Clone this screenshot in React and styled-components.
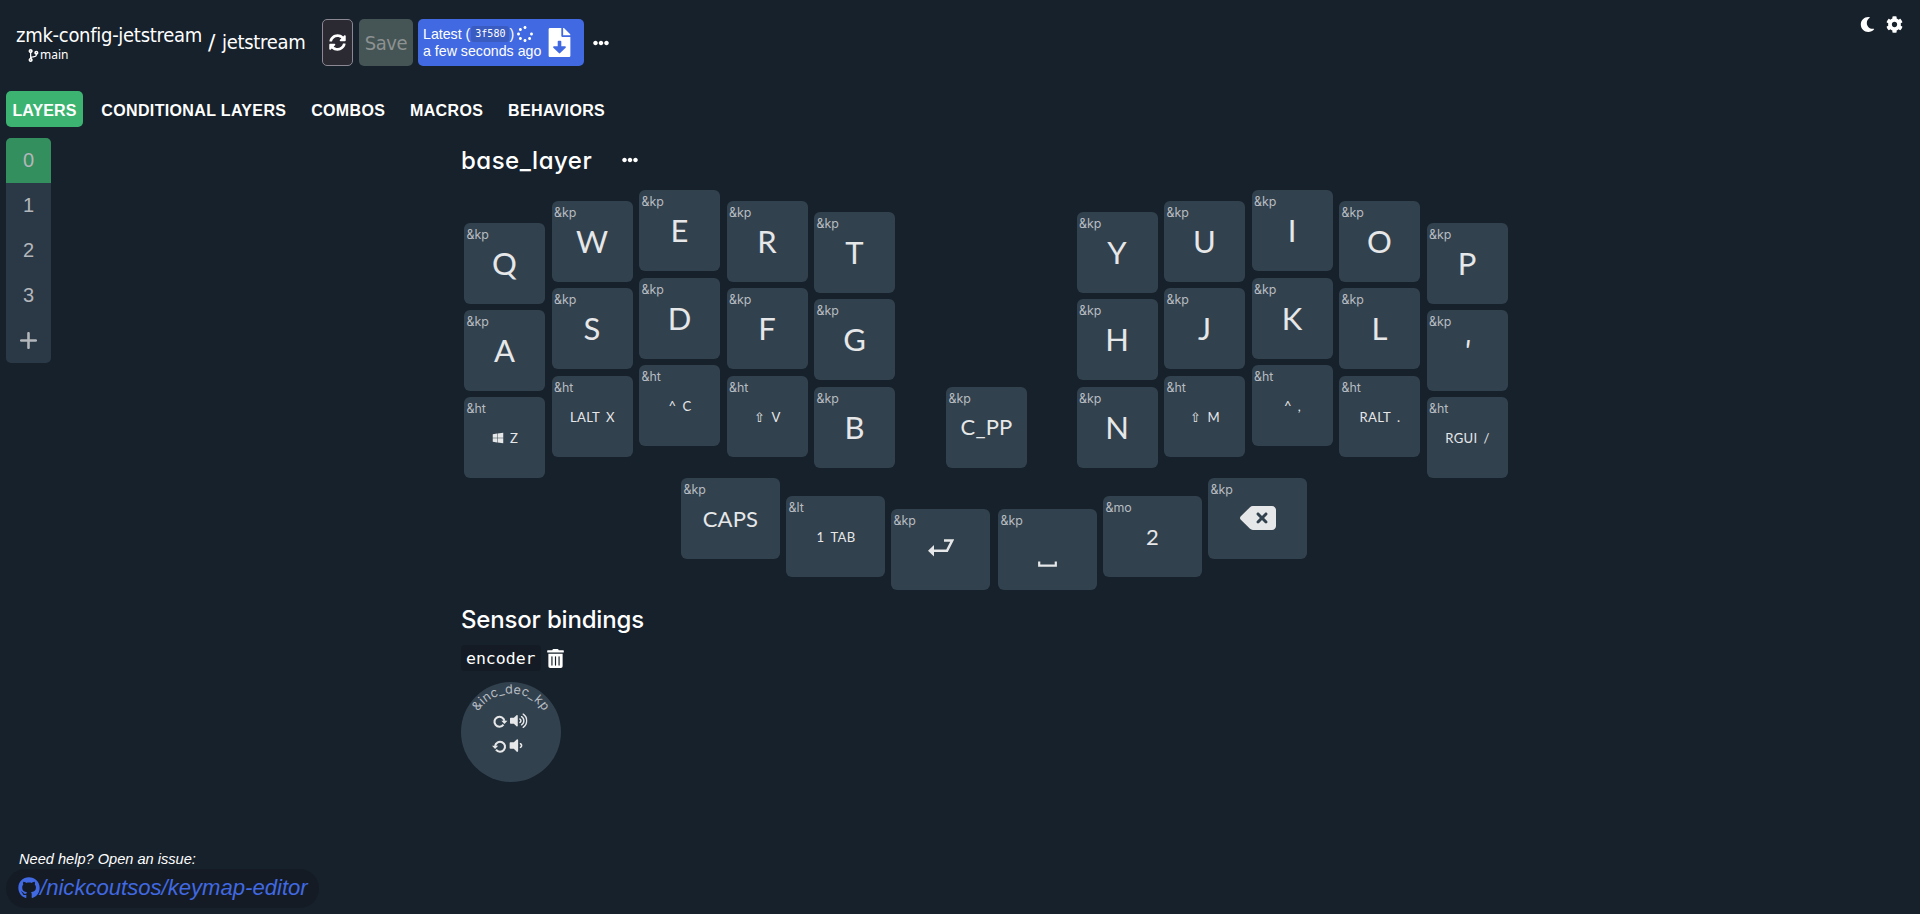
import React from 'react';
import styled, { createGlobalStyle, css } from 'styled-components';
import { FaSyncAlt, FaCodeBranch, FaMoon, FaCog, FaEllipsisH, FaSpinner, FaFileDownload, FaTrashAlt, FaGithub, FaWindows, FaVolumeUp, FaVolumeDown } from 'react-icons/fa';
import { FaDeleteLeft } from 'react-icons/fa6';

const GlobalStyle = createGlobalStyle`
  *, *::before, *::after { box-sizing: border-box; }
  html, body { margin: 0; padding: 0; background: #17212b; }
  body { overflow: hidden; font-family: "Liberation Sans", Arial, sans-serif; color: #fff; }
  button { font: inherit; color: inherit; border: 0; background: none; padding: 0; margin: 0; }
`;

const rounded = css`
  font-family: Inter, Lato, sans-serif;
  font-feature-settings: "cv11" 1;
`;

const Page = styled.div`
  display: flex;
  flex-direction: column;
  width: 100%;
  height: 914px;
  overflow: hidden;
  background: #17212b;
`;

const TopBar = styled.header`
  display: flex;
  align-items: center;
  height: 47px;
  margin-top: 19px;
  padding-left: 16px;
`;

const Crumb = styled.div`
  display: flex;
  flex-direction: column;
  height: 47px;
  padding-top: 4px;
`;

const RepoName = styled.span`
  font-family: "DejaVu Sans", sans-serif;
  font-stretch: condensed;
  font-size: 20px;
  line-height: 25px;
  letter-spacing: -0.28px;
  white-space: nowrap;
`;

const Branch = styled.span`
  display: flex;
  align-items: center;
  margin-left: 11px;
  font-family: "Noto Sans", sans-serif;
  font-size: 12px;
  line-height: 14px;
  svg { width: 13px; height: 13px; }
`;

const Slash = styled.span`
  margin: 0 6.5px 0 6px;
  font-family: "DejaVu Sans", sans-serif;
  font-size: 22px;
`;

const TitleGroup = styled.div`
  display: flex;
  align-items: center;
  width: 306px;
`;

const RefreshButton = styled.button`
  display: grid;
  place-items: center;
  width: 31px;
  height: 47px;
  margin-right: 6px;
  border: 1px solid #8b8793;
  border-radius: 5px;
  background: #2b2932;
  svg { width: 17px; height: 17px; }
`;

const SaveButton = styled.button`
  width: 54px;
  height: 47px;
  margin-right: 5px;
  border-radius: 5px;
  background: #455454;
  color: #8c9192;
  font-family: "DejaVu Sans", sans-serif;
  font-size: 20px;
  font-stretch: condensed;
  letter-spacing: -0.4px;
`;

const BuildButton = styled.button`
  display: flex;
  align-items: center;
  width: 166px;
  height: 47px;
  padding-left: 5px;
  border-radius: 5px;
  background: #4169e1;
  font-size: 14.2px;
  text-align: left;
`;

const BuildText = styled.div`
  width: 122px;
  line-height: 17px;
  white-space: nowrap;
`;

const BuildLine = styled.div`
  display: flex;
  align-items: center;
  height: 17px;
  svg { width: 16px; height: 16px; margin-left: 3px; }
`;

const Hash = styled.code`
  margin-left: 1px;
  padding: 0 4px;
  border-radius: 3px;
  background: #3a5bbf;
  font-family: "DejaVu Sans Mono", monospace;
  font-size: 10px;
  line-height: 16px;
`;

const MoreDots = styled.span`
  display: flex;
  margin-left: ${(p) => p.$gap}px;
  svg { width: 16px; height: 16px; }
`;

const PageActions = styled.div`
  display: flex;
  align-items: center;
  gap: 11px;
  align-self: flex-start;
  margin: -3px 17px 0 auto;
`;

const Tabs = styled.nav`
  display: flex;
  gap: 12px;
  margin: 25px 0 11px 6px;
`;

const Tab = styled.button`
  height: 36px;
  padding: 3px 6.3px 0 6.5px;
  border-radius: 5px;
  background: ${(p) => (p.$active ? '#3cb371' : 'transparent')};
  font-weight: bold;
  font-size: 16px;
  letter-spacing: ${(p) => (p.$active ? 0.1 : 0.35)}px;
  white-space: nowrap;
`;

const Body = styled.main`
  display: flex;
  flex: 1;
`;

const LayerList = styled.div`
  width: 45px;
  height: 225px;
  margin-left: 6px;
  border-radius: 5px;
  overflow: hidden;
  background: #2b3947;
`;

const LayerItem = styled.button`
  display: grid;
  place-items: center;
  width: 45px;
  height: 45px;
  background: ${(p) => (p.$active ? '#338f5e' : 'transparent')};
  color: #b3b6ba;
  font-size: 20px;
`;

const Editor = styled.section`
  display: flex;
  flex-direction: column;
  width: 1060px;
  margin-left: 410px;
`;

const LayerTitle = styled.div`
  display: flex;
  align-items: center;
  height: 44px;
  h2 {
    ${rounded}
    width: 132px;
    margin: 0;
    font-size: 24px;
    font-weight: 500;
    letter-spacing: 0.5px;
    white-space: nowrap;
  }
`;

const Keyboard = styled.div`
  height: 400px;
  padding: 8px 0 0 3px;
`;

const KeyRow = styled.div`
  display: flex;
  height: 288px;
`;

const Half = styled.div`
  display: flex;
  gap: 6.5px;
`;

const Column = styled.div`
  display: flex;
  flex-direction: column;
  gap: 6.5px;
  margin-top: ${(p) => p.$offset}px;
`;

const CenterKey = styled.div`
  width: 181.5px;
  margin-top: 196.9px;
  padding-left: 51px;
`;

const Thumbs = styled.div`
  display: flex;
  gap: 6px;
  padding-left: 217px;
`;

const ThumbSlot = styled.div`
  margin-top: ${(p) => p.$offset}px;
  margin-left: ${(p) => p.$shift || 0}px;
`;

const KeyBox = styled.div`
  display: flex;
  flex-direction: column;
  width: ${(p) => (p.$wide ? 99 : 81)}px;
  height: 81px;
  border-radius: 6px;
  background: #32414e;
`;

const Behavior = styled.span`
  ${rounded}
  height: 20px;
  padding: 4px 0 0 2.5px;
  color: #b7bcc1;
  font-size: 12.4px;
  line-height: 16px;
`;

const Legend = styled.span`
  display: flex;
  justify-content: center;
  align-items: center;
  gap: ${(p) => (p.$kind === 'small' ? 6 : 0)}px;
  height: ${(p) => (p.$kind === 'small' ? 42 : 40)}px;
  padding-left: ${(p) => (p.$kind === 'small' ? 1 : 0)}px;
  color: #e6e7e8;
  font-family: Lato, sans-serif;
  font-size: ${(p) => ({ big: 31, mid: 22, small: 13.1 })[p.$kind]}px;
  font-style: ${(p) => (p.$slanted ? 'italic' : 'normal')};
  letter-spacing: ${(p) => ({ big: 0, mid: 0.2, small: 0.3 })[p.$kind]}px;
  svg { display: block; }
`;

const SensorTitle = styled.h2`
  ${rounded}
  margin: 20px 0 0;
  font-size: 24px;
  font-weight: 500;
  line-height: 36px;
  letter-spacing: -0.18px;
`;

const SensorName = styled.div`
  display: flex;
  align-items: center;
  height: 26px;
  margin-top: 7px;
  svg { width: 17px; height: 19px; margin-left: 5.5px; }
  code {
    width: 80px;
    height: 26px;
    padding: 1px 0 0 5px;
    border-radius: 4px;
    background: #141b24;
    font-family: "DejaVu Sans Mono", monospace;
    font-size: 16.5px;
    line-height: 26px;
  }
`;

const Encoder = styled.svg`
  display: block;
  margin-top: 11px;
  width: 100px;
  height: 100px;
  overflow: visible;
  text {
    ${rounded}
    font-size: 12.6px;
    letter-spacing: 0.3px;
    fill: #b7bcc1;
  }
`;

const Help = styled.footer`
  display: flex;
  flex-direction: column;
  height: 63px;
  margin-bottom: 6px;
  padding-left: 6px;
  font-style: italic;
`;

const HelpText = styled.span`
  height: 24px;
  padding: 5px 0 0 13px;
  font-size: 14.6px;
  line-height: 18px;
`;

const RepoLink = styled.a`
  display: flex;
  align-items: center;
  width: 313px;
  height: 39px;
  padding: 0 0 2px 12px;
  border-radius: 20px;
  background: #141b24;
  color: #4169e1;
  font-size: 22.1px;
  white-space: nowrap;
  svg { width: 22px; height: 22px; }
`;

const PlusIcon = () => (
  <svg width="17" height="17" viewBox="0 0 17 17" stroke="currentColor" strokeWidth="2.6" strokeLinecap="round">
    <path d="M8.5 1.2V15.8M1.2 8.5H15.8" />
  </svg>
);

const ReturnIcon = () => (
  <svg width="26" height="20" viewBox="0 0 26 20" fill="none">
    <path d="M16 1.5H24.2L19 11.7H5" stroke="#e6e7e8" strokeWidth="2.5" />
    <path d="M0 11.7L6 6V17.5Z" fill="#e6e7e8" />
  </svg>
);

const SpaceIcon = () => (
  <svg width="19" height="36" viewBox="0 0 19 36" fill="none">
    <path d="M1.2 30.5V34.7H17.8V30.5" stroke="#e6e7e8" strokeWidth="2.2" />
  </svg>
);

const Turn = ({ x, y, flip }) => (
  <g transform={`translate(${x} ${y}) scale(${flip ? -1 : 1} 1)`}>
    <path d="M4 3.2A5 5 0 1 1 4.9 -0.6" fill="none" stroke="currentColor" strokeWidth="2.1" />
    <path d="M1.8 -0.8H8L4.9 2.6Z" fill="currentColor" />
  </g>
);

function Key({ bind = '&kp', kind = 'big', wide, children }) {
  return (
    <KeyBox $wide={wide}>
      <Behavior>{bind}</Behavior>
      <Legend $kind={kind} $slanted={children === "'"}>{children}</Legend>
    </KeyBox>
  );
}

const hold = (...parts) => ({ bind: '&ht', kind: 'small', parts });

const leftColumns = [
  [32.8, ['Q', 'A', hold(<FaWindows size={12} />, 'Z')]],
  [10.9, ['W', 'S', hold('LALT', 'X')]],
  [0, ['E', 'D', hold('^', 'C')]],
  [10.9, ['R', 'F', hold('⇧', 'V')]],
  [21.9, ['T', 'G', 'B']],
];

const rightColumns = [
  [21.9, ['Y', 'H', 'N']],
  [10.9, ['U', 'J', hold('⇧', 'M')]],
  [0, ['I', 'K', hold('^', ',')]],
  [10.9, ['O', 'L', hold('RALT', '.')]],
  [32.8, ['P', "'", hold('RGUI', '/')]],
];

function KeyColumns({ columns }) {
  return (
    <Half>
      {columns.map(([offset, keys], i) => (
        <Column key={i} $offset={offset}>
          {keys.map((k, j) =>
            typeof k === 'string' ? (
              <Key key={j}>{k}</Key>
            ) : (
              <Key key={j} bind={k.bind} kind={k.kind}>
                {k.parts.map((part, n) => <span key={n}>{part}</span>)}
              </Key>
            )
          )}
        </Column>
      ))}
    </Half>
  );
}

export default function App() {
  return (
    <Page>
      <GlobalStyle />
      <TopBar>
        <TitleGroup>
          <Crumb>
            <RepoName>zmk-config-jetstream</RepoName>
            <Branch><FaCodeBranch />main</Branch>
          </Crumb>
          <Slash>/</Slash>
          <RepoName>jetstream</RepoName>
        </TitleGroup>
        <RefreshButton><FaSyncAlt /></RefreshButton>
        <SaveButton>Save</SaveButton>
        <BuildButton>
          <BuildText>
            <BuildLine>Latest (<Hash>3f580</Hash>)<FaSpinner /></BuildLine>
            <BuildLine>a few seconds ago</BuildLine>
          </BuildText>
          <FaFileDownload size={29} />
        </BuildButton>
        <MoreDots $gap={9}><FaEllipsisH /></MoreDots>
        <PageActions><FaMoon size={15} /><FaCog size={17} /></PageActions>
      </TopBar>
      <Tabs>
        <Tab $active>LAYERS</Tab>
        <Tab>CONDITIONAL LAYERS</Tab>
        <Tab>COMBOS</Tab>
        <Tab>MACROS</Tab>
        <Tab>BEHAVIORS</Tab>
      </Tabs>
      <Body>
        <LayerList>
          <LayerItem $active>0</LayerItem>
          <LayerItem>1</LayerItem>
          <LayerItem>2</LayerItem>
          <LayerItem>3</LayerItem>
          <LayerItem><PlusIcon /></LayerItem>
        </LayerList>
        <Editor>
          <LayerTitle>
            <h2>base_layer</h2>
            <MoreDots $gap={29}><FaEllipsisH /></MoreDots>
          </LayerTitle>
          <Keyboard>
            <KeyRow>
              <KeyColumns columns={leftColumns} />
              <CenterKey><Key kind="mid">C_PP</Key></CenterKey>
              <KeyColumns columns={rightColumns} />
            </KeyRow>
            <Thumbs>
              <ThumbSlot $offset={0}><Key wide kind="mid">CAPS</Key></ThumbSlot>
              <ThumbSlot $offset={18}><Key wide bind="&lt" kind="small"><span>1</span><span>TAB</span></Key></ThumbSlot>
              <ThumbSlot $offset={31}><Key wide><ReturnIcon /></Key></ThumbSlot>
              <ThumbSlot $offset={31} $shift={2}><Key wide><SpaceIcon /></Key></ThumbSlot>
              <ThumbSlot $offset={18}><Key wide bind="&mo" kind="mid">2</Key></ThumbSlot>
              <ThumbSlot $offset={0}><Key wide><FaDeleteLeft size={36} /></Key></ThumbSlot>
            </Thumbs>
          </Keyboard>
          <SensorTitle>Sensor bindings</SensorTitle>
          <SensorName><code>encoder</code><FaTrashAlt /></SensorName>
          <Encoder viewBox="0 0 100 100">
            <defs><path id="dial-arc" d="M11.5 50A38.5 38.5 0 0 1 88.5 50" /></defs>
            <circle cx="50" cy="50" r="50" fill="#32414e" />
            <text textAnchor="middle"><textPath href="#dial-arc" startOffset="50%">&amp;inc_dec_kp</textPath></text>
            <g color="#e6e7e8">
              <Turn x={38.5} y={39.5} />
              <FaVolumeUp x="49" y="30" size={17.5} />
              <Turn x={39} y={64.5} flip />
              <FaVolumeDown x="46.5" y="55" size={17} />
            </g>
          </Encoder>
        </Editor>
      </Body>
      <Help>
        <HelpText>Need help? Open an issue:</HelpText>
        <RepoLink><FaGithub />/nickcoutsos/keymap-editor</RepoLink>
      </Help>
    </Page>
  );
}
